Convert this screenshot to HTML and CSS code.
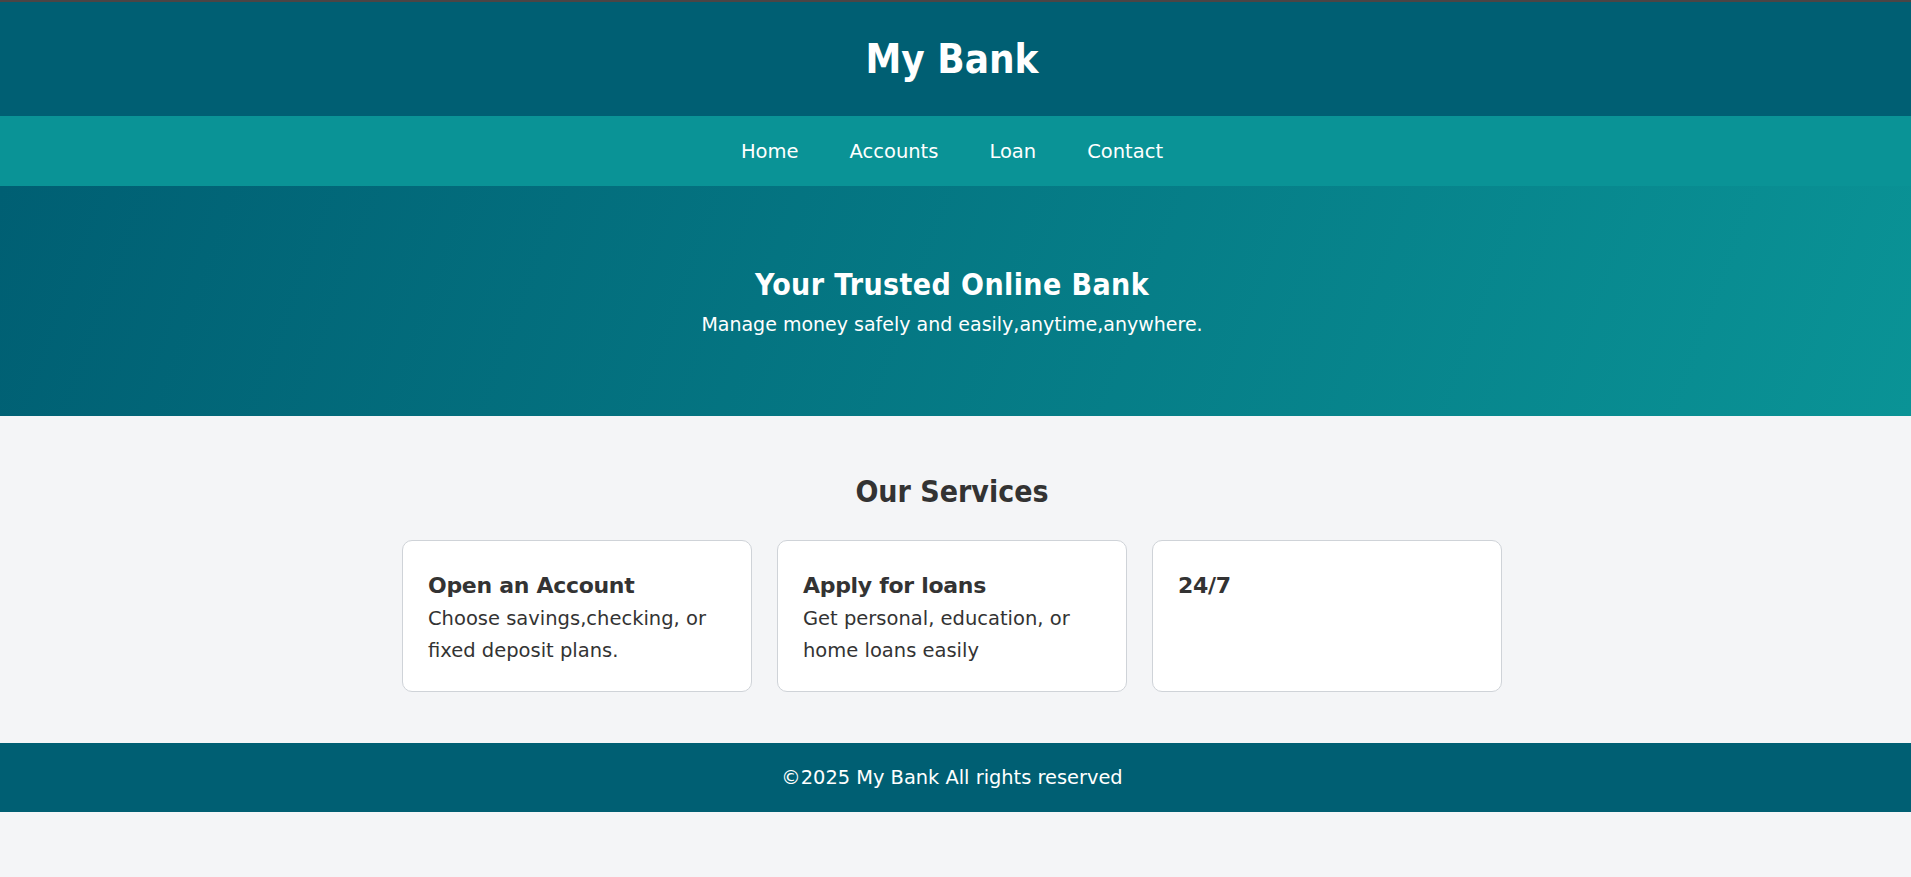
FILE: index.html
```html
<!DOCTYPE html>
<html lang="en">
<head>
<meta charset="utf-8">
<title>My Bank</title>
<link rel="stylesheet" href="styles.css">
</head>
<body>
<header class="site-header">
  <h1 class="brand">My Bank</h1>
</header>
<nav class="main-nav">
  <a href="#" class="nav-link">Home</a>
  <a href="#" class="nav-link">Accounts</a>
  <a href="#" class="nav-link">Loan</a>
  <a href="#" class="nav-link">Contact</a>
</nav>
<section class="hero">
  <h2 class="hero-title">Your Trusted Online Bank</h2>
  <p class="hero-sub">Manage money safely and easily,anytime,anywhere.</p>
</section>
<section class="services">
  <h2 class="services-title">Our Services</h2>
  <div class="cards">
    <div class="card">
      <h3 class="card-title">Open an Account</h3>
      <p class="card-text">Choose savings,checking, or fixed deposit plans.</p>
    </div>
    <div class="card">
      <h3 class="card-title">Apply for loans</h3>
      <p class="card-text">Get personal, education, or home loans easily</p>
    </div>
    <div class="card">
      <h3 class="card-title">24/7</h3>
    </div>
  </div>
</section>
<footer class="site-footer">
  <p class="footer-text">&copy;2025 My Bank All rights reserved</p>
</footer>
</body>
</html>
```
FILE: styles.css
```css
* { box-sizing: border-box; }
html, body { margin: 0; padding: 0; }
body {
  font-family: "DejaVu Sans", Verdana, sans-serif;
  background: #f4f5f7;
  color: #333;
  border-top: 2px solid #4b4545;
}
.site-header,
.main-nav,
.hero,
.services,
.site-footer {
  padding-right: 7px;
}
.site-header {
  background: #005f73;
  height: 114px;
  display: flex;
  align-items: center;
  justify-content: center;
}
.brand {
  margin: 0;
  color: #fff;
  font-family: "DejaVu Sans Condensed", "DejaVu Sans", sans-serif;
  font-size: 40px;
  font-weight: bold;
}
.main-nav {
  background: #0a9396;
  height: 70px;
  display: flex;
  align-items: center;
  justify-content: center;
  gap: 51px;
}
.nav-link {
  color: #fff;
  text-decoration: none;
  font-size: 19.5px;
}
.hero {
  background: linear-gradient(110deg, #005f73, #0a9396);
  height: 230px;
  display: flex;
  flex-direction: column;
  align-items: center;
  justify-content: center;
  color: #fff;
}
.hero-title {
  margin: 0 0 11px;
  font-family: "DejaVu Sans Condensed", "DejaVu Sans", sans-serif;
  font-size: 30px;
  letter-spacing: 0.4px;
  font-weight: bold;
}
.hero-sub {
  margin: 0;
  font-size: 19px;
}
.services {
  padding-top: 58px;
  padding-bottom: 51px;
  display: flex;
  flex-direction: column;
  align-items: center;
}
.services-title {
  margin: 0 0 31px;
  font-family: "DejaVu Sans Condensed", "DejaVu Sans", sans-serif;
  font-size: 30px;
  color: #333;
}
.cards {
  width: 1100px;
  display: grid;
  grid-template-columns: repeat(3, 1fr);
  gap: 25px;
}
.card {
  background: #fff;
  border: 1px solid #cfd3d8;
  border-radius: 10px;
  height: 152px;
  padding: 32px 25px 0;
}
.card-title {
  margin: 0 0 5px;
  font-size: 22px;
  letter-spacing: -0.3px;
  font-weight: bold;
}
.card-text {
  margin: 0;
  font-size: 19.5px;
  line-height: 32px;
}
.site-footer {
  background: #005f73;
  height: 69px;
  display: flex;
  align-items: center;
  justify-content: center;
}
.footer-text {
  margin: 0;
  color: #fff;
  font-size: 19.4px;
}
```
